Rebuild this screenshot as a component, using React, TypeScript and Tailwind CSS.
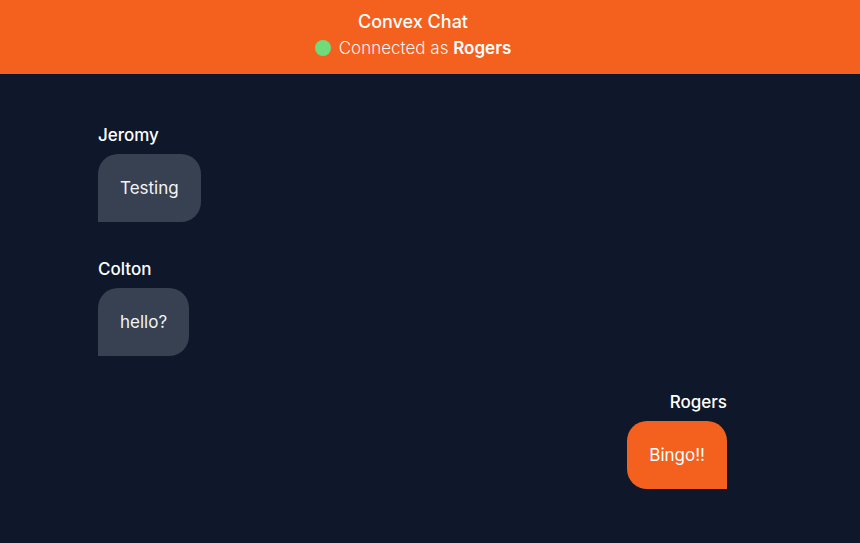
import React from 'react';

interface Message {
  author: string;
  body: string;
}

const me = 'Rogers';

const messages: Message[] = [
  { author: 'Jeromy', body: 'Testing' },
  { author: 'Colton', body: 'hello?' },
  { author: 'Rogers', body: 'Bingo!!' },
];

export default function App() {
  return (
    <div
      className="min-h-screen bg-[#0f172a] text-white"
      style={{ fontFamily: 'Inter, "Noto Sans", sans-serif' }}
    >
      {/* Header */}
      <header className="h-[74px] bg-[#f4601e]">
        <div className="w-[826px] h-full flex flex-col items-center pt-[10px]">
          <h1 className="text-[18px] leading-[24px] font-medium">Convex Chat</h1>
          <div className="flex items-center gap-[8px] mt-[2px] text-[17px] leading-[24px]">
            <span className="w-[16px] h-[16px] rounded-full bg-[#6fdc7c] blur-[0.5px]" />
            <span className="font-light text-white/95">
              Connected as <strong className="font-semibold text-white">{me}</strong>
            </span>
          </div>
        </div>
      </header>

      {/* Messages */}
      <main className="w-[825px] px-[98px] pt-[49px] flex flex-col gap-[34.5px]">
        {messages.map((m, i) => {
          const mine = m.author === me;
          return (
            <article key={i} className={`flex flex-col gap-[7px] ${mine ? 'items-end' : 'items-start'}`}>
              <div className="text-[17px] leading-[24px] font-medium">{m.author}</div>
              <p
                className={
                  mine
                    ? 'bg-[#f4601e] rounded-[20px] rounded-br-none px-[22px] py-[22px] text-[17px] leading-[24px]'
                    : 'bg-[#374151] rounded-[20px] rounded-bl-none px-[22px] py-[22px] text-[17px] leading-[24px] text-gray-100'
                }
              >
                {m.body}
              </p>
            </article>
          );
        })}
      </main>
    </div>
  );
}
